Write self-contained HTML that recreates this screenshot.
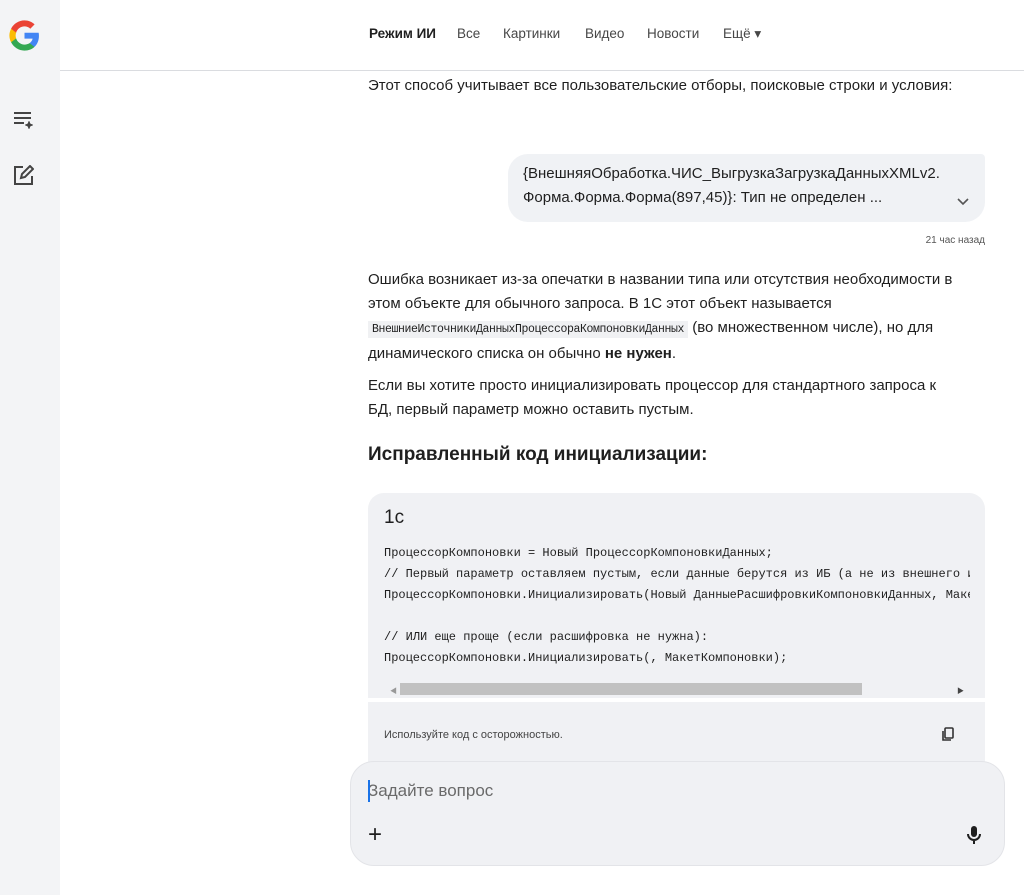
<!DOCTYPE html>
<html><head><meta charset="utf-8"><style>
*{box-sizing:border-box;margin:0;padding:0}
body{width:1024px;height:895px;overflow:hidden;background:#fff;font-family:"Liberation Sans","Noto Sans CJK SC",sans-serif;color:#1f1f1f;position:relative}
.side{position:absolute;left:0;top:0;width:60px;height:895px;background:#f3f4f6}
.top{position:absolute;left:60px;top:0;right:0;height:71px;border-bottom:1px solid #dadce0;background:#fff}
.nav{position:absolute;top:26px;font-size:13.5px;color:#474747}
p{position:absolute;left:368px;width:620px;font-size:15px;line-height:24px;color:#1f1f1f}
.code{font-family:"Liberation Mono",monospace;font-size:12px;white-space:pre;color:#1f1f1f}
</style></head><body>
<div class="side">
<svg style="position:absolute;left:8px;top:19px" width="33" height="33" viewBox="0 0 48 48"><path fill="#4285F4" d="M45 24.5c0-1.6-.1-3.1-.4-4.5H24v8.5h11.8c-.5 2.7-2.1 5-4.4 6.6v5.5h7.1C42.6 36.8 45 31.2 45 24.5z"/><path fill="#34A853" d="M24 46c5.9 0 10.9-2 14.5-5.4l-7.1-5.5c-2 1.3-4.5 2.1-7.4 2.1-5.7 0-10.5-3.8-12.2-9H4.5v5.7C8.1 41 15.5 46 24 46z"/><path fill="#FBBC05" d="M11.8 28.2c-.4-1.3-.7-2.7-.7-4.2s.3-2.9.7-4.2v-5.7H4.5C3 17.1 2 20.5 2 24s1 6.9 2.5 9.9l7.3-5.7z"/><path fill="#EA4335" d="M24 10.8c3.2 0 6.1 1.1 8.4 3.3l6.3-6.3C34.9 4.2 29.9 2 24 2 15.5 2 8.1 7 4.5 14.1l7.3 5.7c1.7-5.2 6.5-9 12.2-9z"/></svg>
<svg style="position:absolute;left:13px;top:111px" width="22" height="20" viewBox="0 0 22 20" fill="none" stroke="#444" stroke-width="2"><path d="M1 2h17M1 7h17M1 12h10"/><path d="M16 10l1.2 2.8L20 14l-2.8 1.2L16 18l-1.2-2.8L12 14l2.8-1.2z" fill="#444" stroke-width="0.5"/></svg>
<svg style="position:absolute;left:14px;top:165px" width="20" height="20" viewBox="0 0 20 20" fill="none" stroke="#444" stroke-width="2"><path d="M9 2H1v17h17v-8"/><path d="M7 13l1-4 8-8 3 3-8 8z"/></svg>
</div>
<div class="top">
<span class="nav" style="left:309px;color:#1f1f1f;font-weight:bold">Режим ИИ</span>
<span class="nav" style="left:397px">Все</span>
<span class="nav" style="left:443px">Картинки</span>
<span class="nav" style="left:525px">Видео</span>
<span class="nav" style="left:587px">Новости</span>
<span class="nav" style="left:663px">Ещё ▾</span>
</div>
<p style="top:74px">Этот способ учитывает все пользовательские отборы, поисковые строки и условия:</p>
<div style="position:absolute;left:508px;top:154px;width:477px;height:68px;background:#f0f2f5;border-radius:20px 4px 20px 20px"></div>
<p style="top:162px;left:523px;width:440px">{ВнешняяОбработка.ЧИС_ВыгрузкаЗагрузкаДанныхXMLv2.<br>Форма.Форма.Форма(897,45)}: Тип не определен ...</p>
<svg style="position:absolute;left:956px;top:197px" width="14" height="10" viewBox="0 0 14 10"><path d="M2 2l5 5 5-5" stroke="#555" stroke-width="1.6" fill="none"/></svg>
<div style="position:absolute;right:39px;top:235px;font-size:10px;color:#555">21 час назад</div>
<p style="top:268px">Ошибка возникает из-за опечатки в названии типа или отсутствия необходимости в этом объекте для обычного запроса. В 1С этот объект называется <span style="font-family:'Liberation Mono',monospace;font-size:11.5px;background:#f0f1f3;padding:2px 4px;letter-spacing:-0.4px">ВнешниеИсточникиДанныхПроцессораКомпоновкиДанных</span> (во множественном числе), но для динамического списка он обычно <b>не нужен</b>.</p>
<p style="top:374px;width:592px">Если вы хотите просто инициализировать процессор для стандартного запроса к БД, первый параметр можно оставить пустым.</p>
<div style="position:absolute;left:368px;top:444px;font-size:19px;font-weight:bold">Исправленный код инициализации:</div>
<div style="position:absolute;left:368px;top:493px;width:617px;height:205px;background:#f0f1f4;border-radius:16px 16px 0 0;overflow:hidden">
<div style="position:absolute;left:16px;top:14px;font-size:19px">1с</div>
<div style="position:absolute;left:16px;top:50px;width:586px;overflow:hidden"><div class="code" style="line-height:21px">ПроцессорКомпоновки = Новый ПроцессорКомпоновкиДанных;
// Первый параметр оставляем пустым, если данные берутся из ИБ (а не из внешнего источника)
ПроцессорКомпоновки.Инициализировать(Новый ДанныеРасшифровкиКомпоновкиДанных, МакетКомпоновки);

// ИЛИ еще проще (если расшифровка не нужна):
ПроцессорКомпоновки.Инициализировать(, МакетКомпоновки);</div></div>
<div style="position:absolute;left:0;top:188px;width:617px;height:17px;background:#f0f1f4"></div>
<div style="position:absolute;left:32px;top:190px;width:462px;height:12px;background:#c1c1c1"></div>
<div style="position:absolute;left:22px;top:193px;font-size:7px;color:#999">◀</div>
<div style="position:absolute;left:589px;top:193px;font-size:7px;color:#444">▶</div>
</div>
<div style="position:absolute;left:368px;top:702px;width:617px;height:64px;background:#f0f1f4"></div>
<div style="position:absolute;left:384px;top:729px;font-size:11px;color:#444">Используйте код с осторожностью.</div>
<svg style="position:absolute;left:940px;top:726px" width="16" height="16" viewBox="0 0 16 16" fill="none" stroke="#333" stroke-width="1.6"><rect x="5" y="2" width="8" height="10" rx="1"/><path d="M3 5v9h8"/></svg>
<div style="position:absolute;left:350px;top:761px;width:655px;height:105px;background:#f0f1f4;border:1px solid #e3e4e8;border-radius:24px"></div>
<div style="position:absolute;left:368px;top:781px;font-size:17px;color:#6a6a6a">Задайте вопрос</div>
<div style="position:absolute;left:368px;top:780px;width:1.5px;height:22px;background:#1a73e8"></div>
<div style="position:absolute;left:368px;top:820px;font-size:24px;color:#1f1f1f;line-height:30px">+</div>
<svg style="position:absolute;left:966px;top:825px" width="16" height="20" viewBox="0 0 16 20"><rect x="5" y="1" width="6" height="11" rx="3" fill="#1f1f1f"/><path d="M2 9a6 6 0 0012 0M8 15v4" stroke="#1f1f1f" stroke-width="2" fill="none"/></svg>
</body></html>
